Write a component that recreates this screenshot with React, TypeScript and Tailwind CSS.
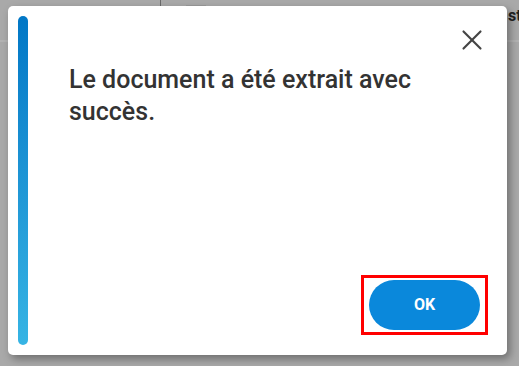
import { X } from "lucide-react";

function Backdrop() {
  return (
    <div className="absolute inset-0 bg-[#a9a9a9]">
      <div className="h-[42px] border-b-2 border-[#b3b3b3] relative">
        <div className="absolute left-[160px] top-0 h-[16px] w-[1px] bg-[#6a6a6a]" />
        <div className="absolute left-[186px] top-[5px] h-[2px] w-[20px] bg-[#9a9a9a]" />
        <span className="absolute left-[508px] top-[4px] text-[16px] font-bold text-[#222] font-['Roboto',sans-serif]">
          st
        </span>
      </div>
    </div>
  );
}

export default function App() {
  return (
    <div className="relative w-[519px] h-[366px] overflow-hidden font-['Roboto',sans-serif]">
      <Backdrop />
      <div className="relative ml-2 pt-1.5">
        <div className="relative flex w-[499px] h-[349px] bg-white rounded-[5px] p-[10px] shadow-[3px_4px_8px_rgba(0,0,0,0.35)]">
          <div className="w-[10px] self-stretch rounded-full bg-gradient-to-b from-[#0177c6] to-[#36b4e4]" />
          <div className="flex flex-1 flex-col justify-between pl-[41px] pt-[48px] pr-[9px] pb-[10px]">
            <p className="text-[25px] leading-[32px] font-medium text-[#333333] pr-[30px]">
              Le document a été extrait avec succès.
            </p>
            <div className="self-end border-[3px] border-[#ff0000] px-[5px] py-[2px]">
              <button
                type="button"
                className="w-[111px] h-[50px] rounded-full bg-[#0a88db] text-white text-[16px] font-bold"
              >
                OK
              </button>
            </div>
          </div>
          <button
            type="button"
            className="absolute right-[18px] top-[17px] text-[#444]"
            aria-label="Fermer"
          >
            <X size={34} strokeWidth={1.5} />
          </button>
        </div>
      </div>
    </div>
  );
}
